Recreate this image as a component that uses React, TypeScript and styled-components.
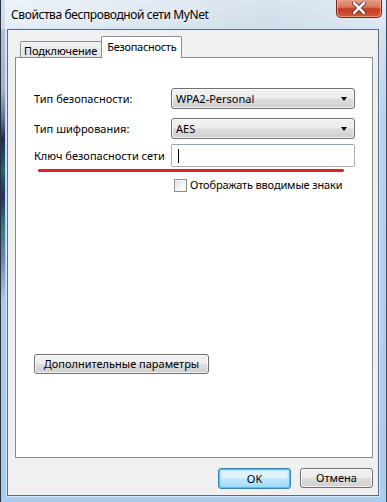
import React from "react";
import styled, { createGlobalStyle } from "styled-components";

const GlobalStyle = createGlobalStyle`
  html, body {
    margin: 0;
    padding: 0;
    background: #ffffff;
  }
  * {
    box-sizing: border-box;
  }
`;

const FONT = `"Noto Sans", "Open Sans", "DejaVu Sans", sans-serif`;

const Window = styled.div`
  width: 387px;
  height: 502px;
  display: flex;
  flex-direction: column;
  padding: 0 7px 6px 6px;
  border-left: 1px solid #2a3140;
  border-right: 1px solid #3b4d66;
  background:
    linear-gradient(
        to bottom,
        #b8c8dc 0px,
        #9fb2c8 90px,
        #5c6f92 120px,
        #1d2a5a 140px,
        #1f6a70 170px,
        #203066 195px,
        #2a7a7e 225px,
        #6d87b4 260px,
        #a9c9ec 300px,
        #a9cdef 502px
      )
      left top / 4px 100% no-repeat,
    linear-gradient(to bottom, #e2ebf5 0px, #d3e2f1 30px, #b7d4f0 120px, #a9cdf0 502px);
  font-family: ${FONT};
  font-size: 11px;
  color: #000;
`;

const TitleBar = styled.div`
  height: 29px;
  display: flex;
  align-items: flex-start;
  justify-content: space-between;
  background: linear-gradient(to right, rgba(255, 255, 255, 0.4), rgba(190, 198, 206, 0.2) 70%, rgba(230, 236, 244, 0.4));
  margin: 0 -7px 0 -6px;
  padding: 0 4px 0 10px;
`;

const Title = styled.div`
  font-size: 12px;
  letter-spacing: -0.4px;
  line-height: 16px;
  padding-top: 7px;
  color: #000;
  text-shadow: 0 0 8px rgba(255, 255, 255, 0.9);
`;

const CloseButton = styled.div`
  width: 46px;
  height: 19px;
  margin-top: -1px;
  border: 1px solid #7a261a;
  border-top: none;
  border-radius: 0 0 5px 5px;
  background: linear-gradient(to bottom, #e8a593 0%, #d7775f 45%, #c33b1f 55%, #d35a3d 100%);
  box-shadow: inset 0 0 0 1px rgba(255, 200, 180, 0.55);
  display: flex;
  align-items: center;
  justify-content: center;
`;

const Client = styled.div`
  flex: 1;
  display: flex;
  flex-direction: column;
  background: #f0f0f0;
  border: 1px solid #5a6a80;
  box-shadow: 0 0 0 1px #d8e8f8;
  padding: 6px 5px 6px 7px;
`;

const TabStrip = styled.div`
  display: flex;
  align-items: flex-end;
  height: 22px;
  position: relative;
  z-index: 1;
`;

const Tab = styled.div<{ $active?: boolean }>`
  height: ${(p) => (p.$active ? "22px" : "17px")};
  margin-left: ${(p) => (p.$active ? "-1px" : "5px")};
  padding: ${(p) => (p.$active ? "2px 5px 0 5px" : "1px 4px 0 3px")};
  border: 1px solid #898c95;
  border-bottom: ${(p) => (p.$active ? "none" : "1px solid #898c95")};
  border-radius: 2px 2px 0 0;
  background: ${(p) => (p.$active ? "#ffffff" : "linear-gradient(to bottom, #f3f3f3, #e4e4e4)")};
  line-height: 15px;
  font-size: 11px;
  letter-spacing: ${(p) => (p.$active ? "-0.3px" : "-0.1px")};
  white-space: nowrap;
`;

const Panel = styled.div`
  flex: 1;
  background: #ffffff;
  border: 1px solid #898c95;
  margin-top: -1px;
  padding: 30px 17px 0 17px;
  display: flex;
  flex-direction: column;
`;

const Row = styled.div<{ $gap: number }>`
  display: flex;
  align-items: center;
  margin-top: ${(p) => p.$gap}px;
`;

const Label = styled.div`
  width: 138px;
  padding-left: 1px;
  white-space: nowrap;
`;

const Combo = styled.div`
  flex: 1;
  height: 21px;
  border: 1px solid #707070;
  border-radius: 3px;
  background: linear-gradient(to bottom, #f2f2f2 0%, #ebebeb 48%, #dddddd 52%, #cfcfcf 100%);
  box-shadow: inset 0 0 0 1px rgba(255, 255, 255, 0.7);
  display: flex;
  align-items: center;
  justify-content: space-between;
  padding: 0 7px 0 4px;
  line-height: 16px;
`;

const Arrow = styled.span`
  width: 0;
  height: 0;
  border-left: 3.5px solid transparent;
  border-right: 3.5px solid transparent;
  border-top: 4px solid #000;
`;

const TextBox = styled.div`
  flex: 1;
  height: 23px;
  border: 1px solid #abadb3;
  border-top-color: #8fa6bf;
  border-radius: 2px;
  background: #ffffff;
  display: flex;
  align-items: center;
  padding-left: 6px;
`;

const Caret = styled.span`
  width: 1px;
  height: 14px;
  background: #000;
`;

const Underline = styled.div`
  height: 3px;
  margin: 2px 11px 0 5px;
  border-radius: 2px;
  background: #e3202a;
`;

const CheckRow = styled.label`
  display: flex;
  align-items: center;
  gap: 3px;
  margin: 5px 0 0 141px;
  line-height: 16px;
  letter-spacing: -0.15px;
  white-space: nowrap;
`;

const CheckBox = styled.span`
  flex: none;
  width: 13px;
  height: 13px;
  border: 1px solid #8e8f8f;
  background: linear-gradient(135deg, #dcdcdc, #f6f6f6 60%, #ffffff);
  box-shadow: inset 0 0 0 1px #f4f4f4;
`;

const Button = styled.div<{ $width: number; $default?: boolean }>`
  width: ${(p) => p.$width}px;
  height: ${(p) => (p.$default ? "21px" : "20px")};
  border: 1px solid ${(p) => (p.$default ? "#3c7fb1" : "#707070")};
  border-radius: 3px;
  background: ${(p) =>
    p.$default
      ? "linear-gradient(to bottom, #eaf6fd 0%, #d9f0fc 48%, #bee6fd 52%, #a7d9f5 100%)"
      : "linear-gradient(to bottom, #f2f2f2 0%, #ebebeb 48%, #dddddd 52%, #cfcfcf 100%)"};
  box-shadow: ${(p) =>
    p.$default ? "inset 0 0 0 1px #48c8f0, inset 0 0 2px 2px rgba(120, 220, 250, 0.6)" : "inset 0 0 0 1px rgba(255, 255, 255, 0.7)"};
  display: flex;
  align-items: center;
  justify-content: center;
  line-height: 16px;
  white-space: nowrap;
`;

const MoreRow = styled.div`
  margin-top: 161px;
  margin-left: 1px;
`;

const Footer = styled.div`
  display: flex;
  justify-content: flex-end;
  align-items: flex-start;
  gap: 9px;
  margin-top: 10px;
`;

const App = () => {
  return (
    <>
      <GlobalStyle />
      <Window>
        <TitleBar>
          <Title>Свойства беспроводной сети MyNet</Title>
          <CloseButton>
            <svg width="14" height="12" viewBox="0 0 14 12">
              <path
                d="M2 1 L12 11 M12 1 L2 11"
                stroke="#5a1a10"
                strokeWidth="4.2"
                strokeLinecap="round"
              />
              <path
                d="M2 1 L12 11 M12 1 L2 11"
                stroke="#ffffff"
                strokeWidth="2.6"
                strokeLinecap="round"
              />
            </svg>
          </CloseButton>
        </TitleBar>
        <Client>
          <TabStrip>
            <Tab>Подключение</Tab>
            <Tab $active>Безопасность</Tab>
          </TabStrip>
          <Panel>
            <Row $gap={0}>
              <Label>Тип безопасности:</Label>
              <Combo>
                WPA2-Personal
                <Arrow />
              </Combo>
            </Row>
            <Row $gap={9}>
              <Label>Тип шифрования:</Label>
              <Combo>
                AES
                <Arrow />
              </Combo>
            </Row>
            <Row $gap={5}>
              <Label>Ключ безопасности сети</Label>
              <TextBox>
                <Caret />
              </TextBox>
            </Row>
            <Underline />
            <CheckRow>
              <CheckBox />
              Отображать вводимые знаки
            </CheckRow>
            <MoreRow>
              <Button $width={175}>Дополнительные параметры</Button>
            </MoreRow>
          </Panel>
          <Footer>
            <Button $width={73} $default>
              OK
            </Button>
            <Button $width={73}>Отмена</Button>
          </Footer>
        </Client>
      </Window>
    </>
  );
};

export default App;
